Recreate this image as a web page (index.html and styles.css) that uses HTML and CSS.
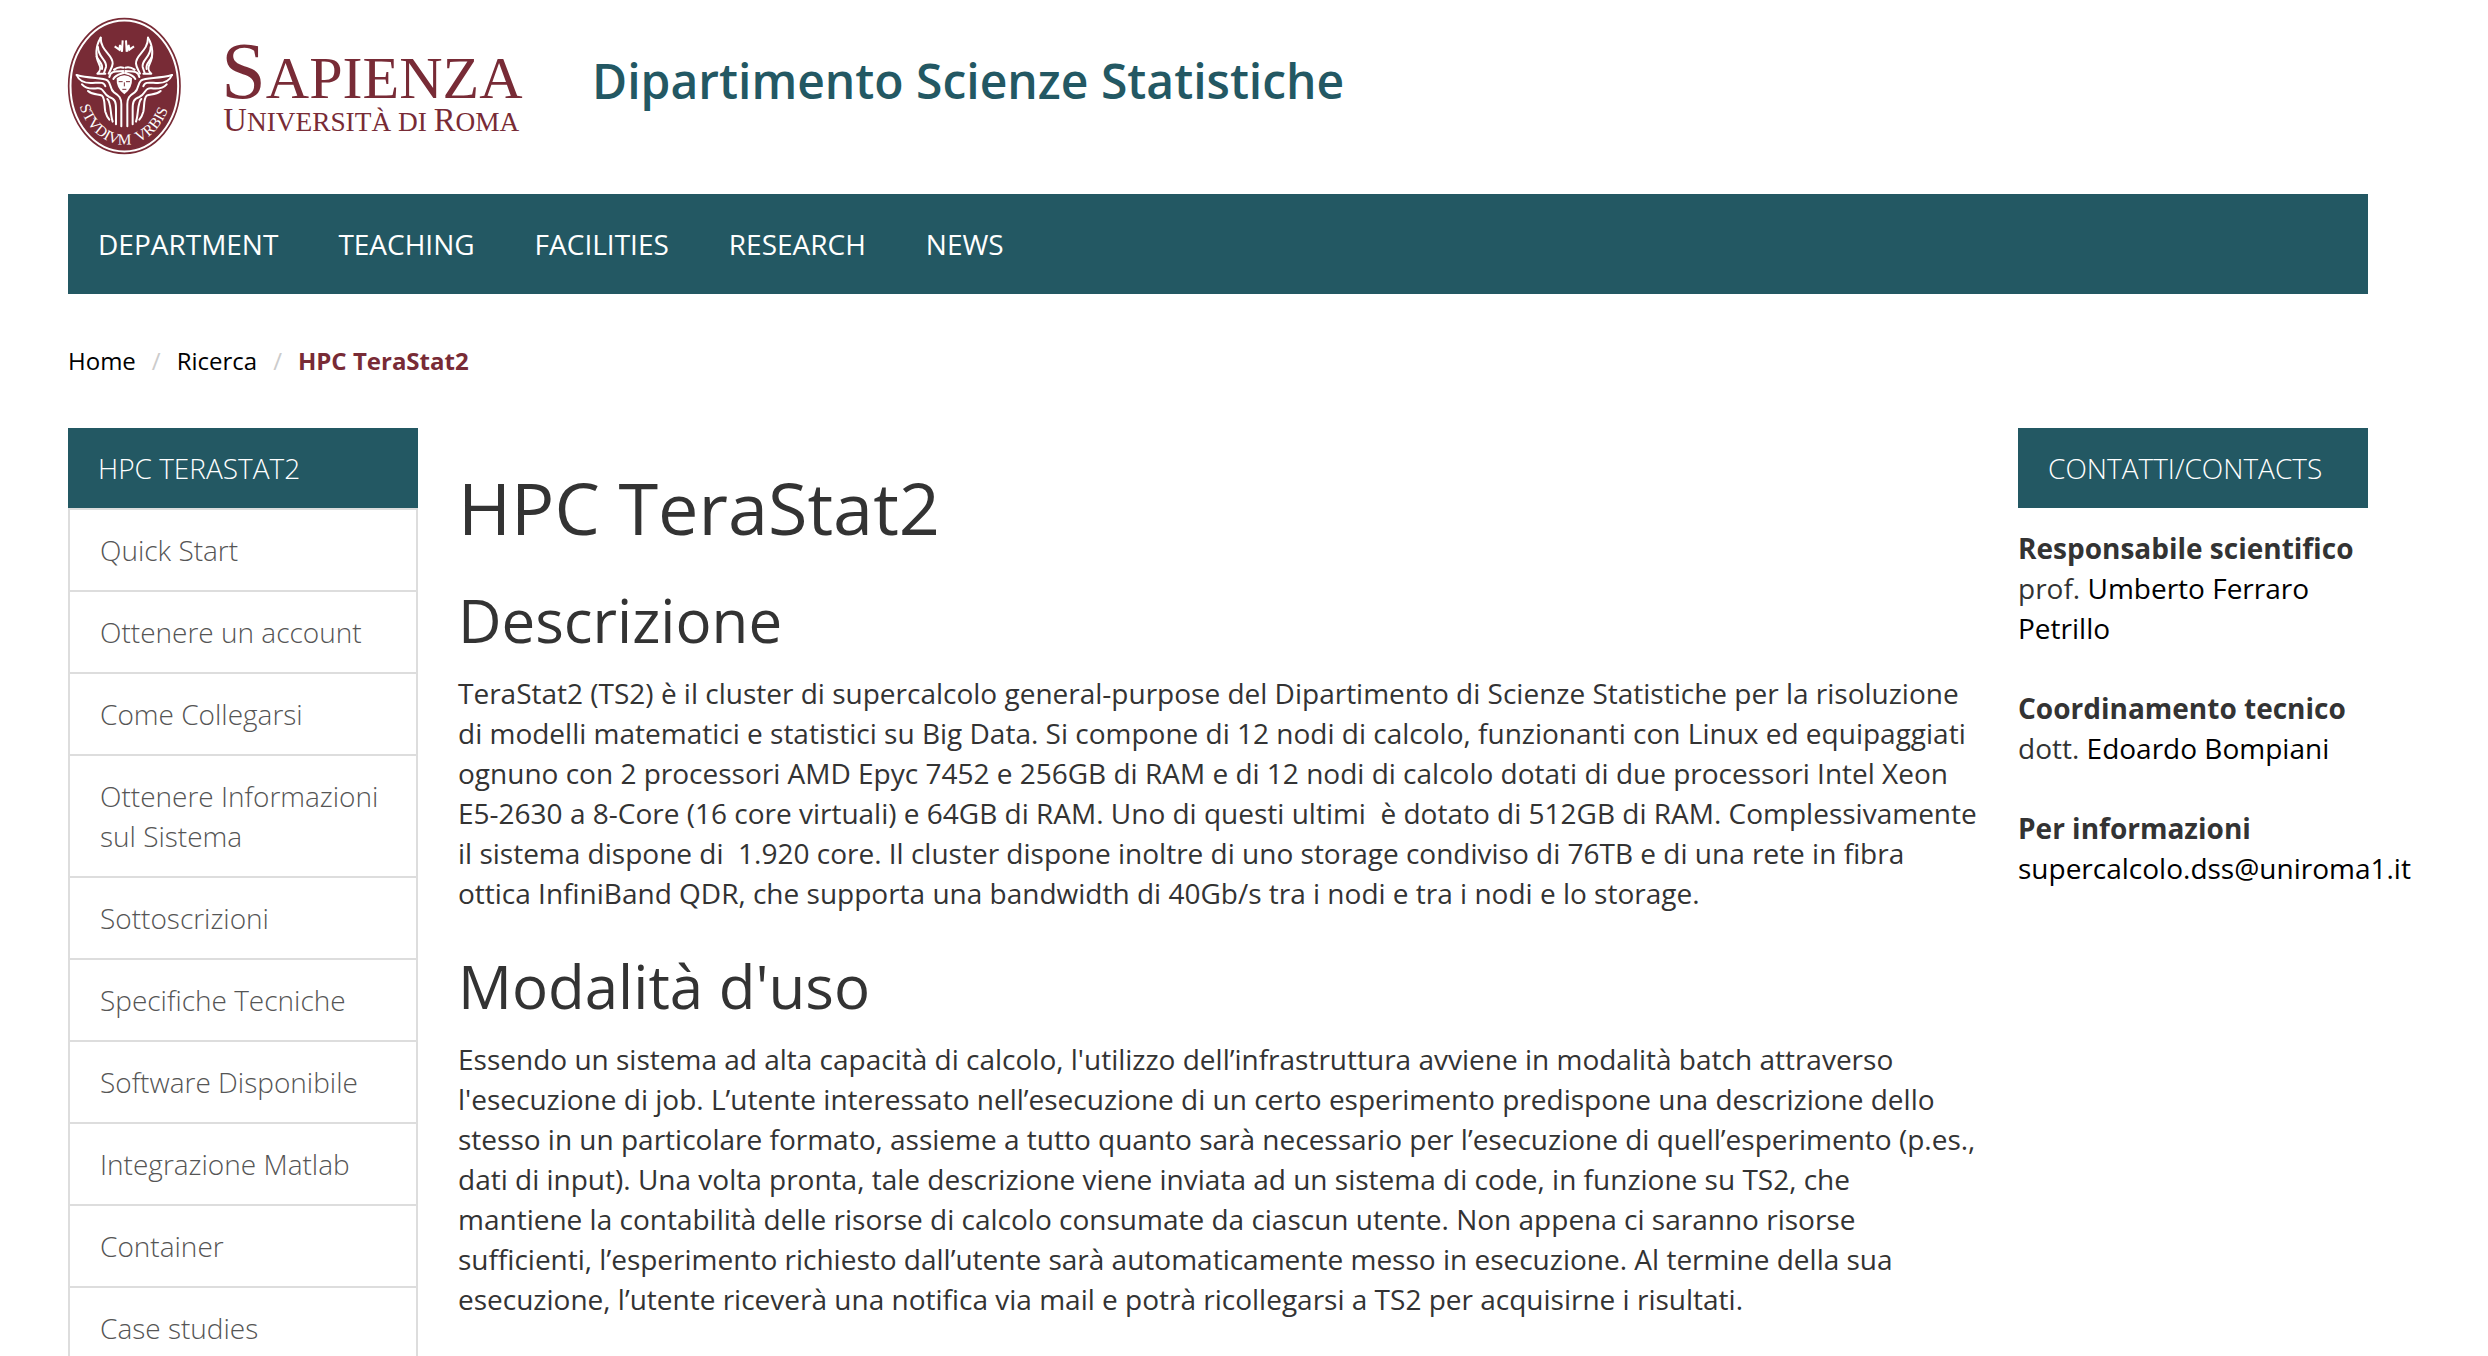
FILE: index.html
```html
<!DOCTYPE html>
<html lang="it">
<head>
<meta charset="utf-8">
<title>HPC TeraStat2 | Dipartimento Scienze Statistiche</title>
<link rel="stylesheet" href="styles.css">
</head>
<body>
<div class="page">
  <header class="masthead">
    <a class="logo" href="#" aria-label="Sapienza Università di Roma">
      <svg class="logo-art" viewBox="0 0 1359 414">
        <defs><path id="motto" d="M35 268A143 176 0 0 0 303 268"/></defs>
        <g fill="none" stroke="#782b36">
          <ellipse cx="169" cy="207" rx="167" ry="202" stroke-width="5"/>
          <ellipse cx="169" cy="207" rx="156" ry="191" fill="#782b36" stroke-width="5"/>
        </g>
        <g fill="none" stroke="#fff" stroke-width="6" stroke-linecap="round" stroke-linejoin="round">
          <g id="half">
            <path d="M98 62C82 88 82 118 92 138C100 154 98 162 88 170H112"/>
            <path d="M98 62C98 104 136 112 134 140C133 152 126 160 122 170"/>
            <path d="M90 90C90 122 118 128 114 150L108 168"/>
            <path d="M86 118C92 136 106 138 102 156"/>
            <path d="M26 174C66 186 104 180 118 190C132 202 124 216 138 226C154 236 160 244 160 262V328"/>
            <path d="M26 174C34 194 54 198 68 198C90 198 108 192 112 208"/>
            <path d="M42 202C54 216 72 216 88 214C110 212 104 232 124 240C142 246 144 256 144 276V322"/>
            <path d="M60 222C76 236 92 230 102 236C112 246 108 266 112 284Q116 298 124 308"/>
            <path d="M118 246C130 256 126 290 134 314"/>
            <path d="M124 180C128 160 146 164 166 162M138 158Q152 148 166 152M136 186C144 172 156 172 167 168"/>
          </g>
          <use href="#half" transform="matrix(-1 0 0 1 338 0)"/>
        </g>
        <path fill="#fff" d="M146 184Q169 166 192 184Q194 214 169 232Q144 214 146 184Z"/>
        <path fill="none" stroke="#782b36" stroke-width="3" d="M152 194H164M174 194H186M169 196V208M163 217H175"/>
        <path fill="none" stroke="#fff" stroke-width="6" d="M140 88L154 98L156 84L162 104L164 70M198 88L184 98L182 84L176 104L174 70"/>
        <text class="motto"><textPath href="#motto">STVDIVM&#160; VRBIS</textPath></text>
        <text class="brand" x="460" y="243"><tspan class="brand-cap">S</tspan>APIENZA</text>
        <text class="sub" x="466" y="343"><tspan class="sub-cap">U</tspan>NIVERSITÀ DI <tspan class="sub-cap">R</tspan>OMA</text>
      </svg>
    </a>
    <a class="dept" href="#">Dipartimento Scienze Statistiche</a>
  </header>

  <nav class="mainnav" aria-label="Menu principale">
    <a href="#">DEPARTMENT</a>
    <a href="#">TEACHING</a>
    <a href="#">FACILITIES</a>
    <a href="#">RESEARCH</a>
    <a href="#">NEWS</a>
  </nav>

  <ol class="breadcrumb">
    <li><a href="#">Home</a></li>
    <li><a href="#">Ricerca</a></li>
    <li class="current">HPC TeraStat2</li>
  </ol>

  <div class="columns">
    <aside>
      <h2 class="box-title">HPC TERASTAT2</h2>
      <ul class="sidemenu">
        <li><a href="#">Quick Start</a></li>
        <li><a href="#">Ottenere un account</a></li>
        <li><a href="#">Come Collegarsi</a></li>
        <li><a href="#">Ottenere Informazioni sul Sistema</a></li>
        <li><a href="#">Sottoscrizioni</a></li>
        <li><a href="#">Specifiche Tecniche</a></li>
        <li><a href="#">Software Disponibile</a></li>
        <li><a href="#">Integrazione Matlab</a></li>
        <li><a href="#">Container</a></li>
        <li><a href="#">Case studies</a></li>
      </ul>
    </aside>

    <main>
      <h1>HPC TeraStat2</h1>
      <h2>Descrizione</h2>
      <p>TeraStat2 (TS2) è il cluster di supercalcolo general-purpose del Dipartimento di Scienze Statistiche per la risoluzione di modelli matematici e statistici su Big Data. Si compone di 12 nodi di calcolo, funzionanti con Linux ed equipaggiati ognuno con 2 processori AMD Epyc 7452 e 256GB di RAM e di 12 nodi di calcolo dotati di due processori Intel Xeon E5-2630 a 8-Core (16 core virtuali) e 64GB di RAM. Uno di questi ultimi&nbsp; è dotato di 512GB di RAM. Complessivamente il sistema dispone di&nbsp; 1.920 core. Il cluster dispone inoltre di uno storage condiviso di 76TB e di una rete in fibra ottica InfiniBand QDR, che supporta una bandwidth di 40Gb/s tra i nodi e tra i nodi e lo storage.</p>
      <h2>Modalità d'uso</h2>
      <p>Essendo un sistema ad alta capacità di calcolo, l'utilizzo dell’infrastruttura avviene in modalità batch attraverso l'esecuzione di job. L’utente interessato nell’esecuzione di un certo esperimento predispone una descrizione dello stesso in un particolare formato, assieme a tutto quanto sarà necessario per l’esecuzione di quell’esperimento (p.es., dati di input). Una volta pronta, tale descrizione viene inviata ad un sistema di code, in funzione su TS2, che mantiene la contabilità delle risorse di calcolo consumate da ciascun utente. Non appena ci saranno risorse sufficienti, l’esperimento richiesto dall’utente sarà automaticamente messo in esecuzione. Al termine della sua esecuzione, l’utente riceverà una notifica via mail e potrà ricollegarsi a TS2 per acquisirne i risultati.</p>
    </main>

    <aside>
      <h2 class="box-title">CONTATTI/CONTACTS</h2>
      <div class="contacts">
        <p><strong>Responsabile scientifico</strong><br>prof. <a href="#">Umberto Ferraro Petrillo</a></p>
        <p><strong>Coordinamento tecnico</strong><br>dott. <a href="#">Edoardo Bompiani</a></p>
        <p><strong>Per informazioni</strong><br><a href="#">supercalcolo.dss@uniroma1.it</a></p>
      </div>
    </aside>
  </div>
</div>
</body>
</html>
```

FILE: styles.css
```css
* {
  box-sizing: border-box;
}

body {
  margin: 0;
  background: #fff;
  color: #333;
  font-family: "Open Sans", "Noto Sans", sans-serif;
  font-size: 28px;
  line-height: 40px;
}

a {
  color: #000;
  text-decoration: none;
}

.page {
  padding: 0 120px 0 68px;
}

.masthead {
  display: flex;
  align-items: flex-start;
  gap: 71px;
  padding: 17px 0 39px;
}

.logo-art {
  display: block;
  width: 453px;
  height: 138px;
  overflow: visible;
  font-family: "Liberation Serif", serif;
  fill: #782b36;
}

.motto {
  font-size: 46px;
  fill: #fff;
}

.brand {
  font-size: 180px;
}

.brand-cap {
  font-size: 240px;
}

.sub {
  font-size: 82px;
}

.sub-cap {
  font-size: 98px;
}

.dept {
  padding-top: 32px;
  color: #235863;
  font-size: 48px;
  font-weight: 600;
  line-height: 64px;
}

.mainnav {
  display: flex;
  background: #235863;
}

.mainnav a {
  padding: 30px;
  color: #fff;
}

.breadcrumb {
  display: flex;
  margin: 0;
  padding: 48px 0;
  list-style: none;
  font-size: 24px;
  line-height: 38px;
}

.breadcrumb li + li::before {
  content: "/";
  padding: 0 16px;
  color: #ccc;
  font-weight: 400;
}

.breadcrumb .current {
  color: #782b36;
  font-weight: 700;
}

.columns {
  display: grid;
  grid-template-columns: 350px minmax(0, 1fr) 350px;
  gap: 40px;
}

.box-title {
  margin: 0;
  padding: 20px 30px;
  background: #235863;
  color: #fff;
  font-size: 28px;
  font-weight: 300;
  line-height: 40px;
}

.sidemenu {
  margin: 0;
  padding: 0;
  list-style: none;
}

.sidemenu li {
  margin-bottom: -2px;
  padding: 20px 30px;
  border: 2px solid #ddd;
}

.sidemenu a {
  color: #555;
  font-weight: 300;
}

main h1,
main h2 {
  margin: 40px 0 20px;
  font-weight: 400;
}

main h1 {
  font-size: 72px;
  line-height: 79px;
}

main h2 {
  font-size: 60px;
  line-height: 66px;
}

main p {
  margin: 0 0 20px;
}

.contacts {
  padding-top: 20px;
}

.contacts p {
  margin: 0 0 40px;
}
```
